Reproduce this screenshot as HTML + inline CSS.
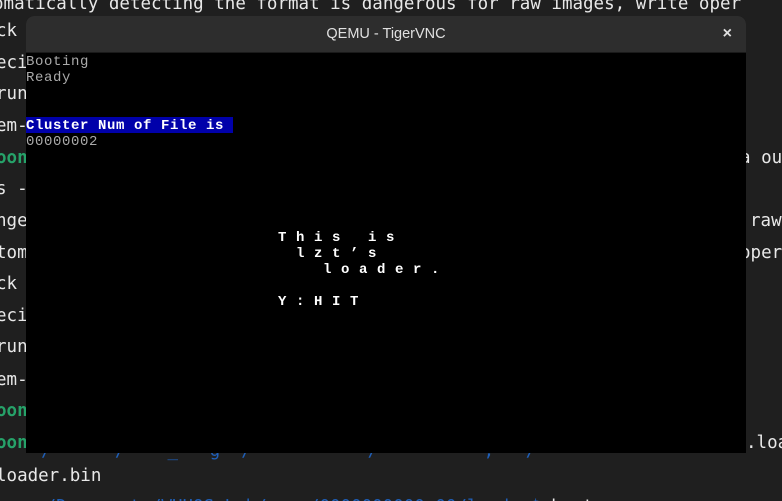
<!DOCTYPE html>
<html><head><meta charset="utf-8"><style>
html,body{margin:0;padding:0;width:782px;height:501px;overflow:hidden;background:#1f1f1f;}
#root{position:relative;width:782px;height:501px;overflow:hidden;}
.t{position:absolute;font-family:"DejaVu Sans Mono","Liberation Mono",monospace;font-size:17.5px;color:#e8e8e8;white-space:pre;line-height:20px;}
.g{color:#26a269;font-weight:bold;}
.b{color:#1f5fb8;}
#win{position:absolute;left:26px;top:16px;width:720px;height:437px;background:#000;border-radius:8px 8px 0 0;overflow:hidden;}
#tb{position:absolute;left:0;top:0;width:720px;height:36px;background:#2d2d2d;border-bottom:1px solid #1a1a1a;color:#e0e0e0;font-family:"Liberation Sans",sans-serif;font-size:14.5px;text-align:center;line-height:36px;}
#x{position:absolute;right:14px;top:0;font-size:16px;font-weight:bold;}
.v{position:absolute;font-family:"Liberation Mono",monospace;font-size:14px;letter-spacing:0.6px;white-space:pre;line-height:16px;color:#aaa;}
.w{color:#fff;font-weight:bold;}
</style></head><body><div id="root">
<div class="t" style="left:-7px;top:-6px">omatically detecting the format is dangerous for raw images, write oper</div>
<div class="t" style="left:-4px;top:21px">ck</div>
<div class="t" style="left:-4px;top:53px">eci</div>
<div class="t" style="left:-4px;top:84px">run</div>
<div class="t" style="left:-4px;top:116px">em-</div>
<div class="t g" style="left:-4px;top:148px">oon</div>
<div class="t" style="left:-4px;top:179px">s -</div>
<div class="t" style="left:-4px;top:211px">nge</div>
<div class="t" style="left:-4px;top:243px">tom</div>
<div class="t" style="left:-4px;top:274px">ck</div>
<div class="t" style="left:-4px;top:306px">eci</div>
<div class="t" style="left:-4px;top:337px">run</div>
<div class="t" style="left:-4px;top:370px">em-</div>
<div class="t g" style="left:-4px;top:401px">oon</div>
<div class="t g" style="left:-4px;top:433px">oon</div>
<div class="t" style="left:-4px;top:466px">loader.bin</div>
<div class="t" style="left:740px;top:148px">a ou</div>
<div class="t" style="left:750px;top:211px">raw</div>
<div class="t" style="left:740px;top:243px">oper</div>
<div class="t" style="left:746px;top:433px">.load</div>
<div class="t b" style="left:20px;top:441px">  /      /    _   g  /           /          ,   /</div>
<div class="t b" style="left:35px;top:497px">~/Documents/WHUOS-Lab/myos/0000000000.00/loader$ <span style="color:#e8e8e8">boot</span></div>
<div id="win">
<div id="tb">QEMU - TigerVNC<span id="x">×</span></div>
<div class="v" style="left:0;top:38px">Booting
Ready</div>
<div style="position:absolute;left:0;top:101px;width:207px;height:16px;background:#0000aa"></div>
<div class="v w" style="left:0;top:102px">Cluster Num of File is</div>
<div class="v" style="left:0;top:118px">00000002</div>
<div class="v w" style="left:252px;top:214px">T h i s   i s
  l z t ’ s
     l o a d e r .

Y : H I T</div>
</div>
</div></body></html>
